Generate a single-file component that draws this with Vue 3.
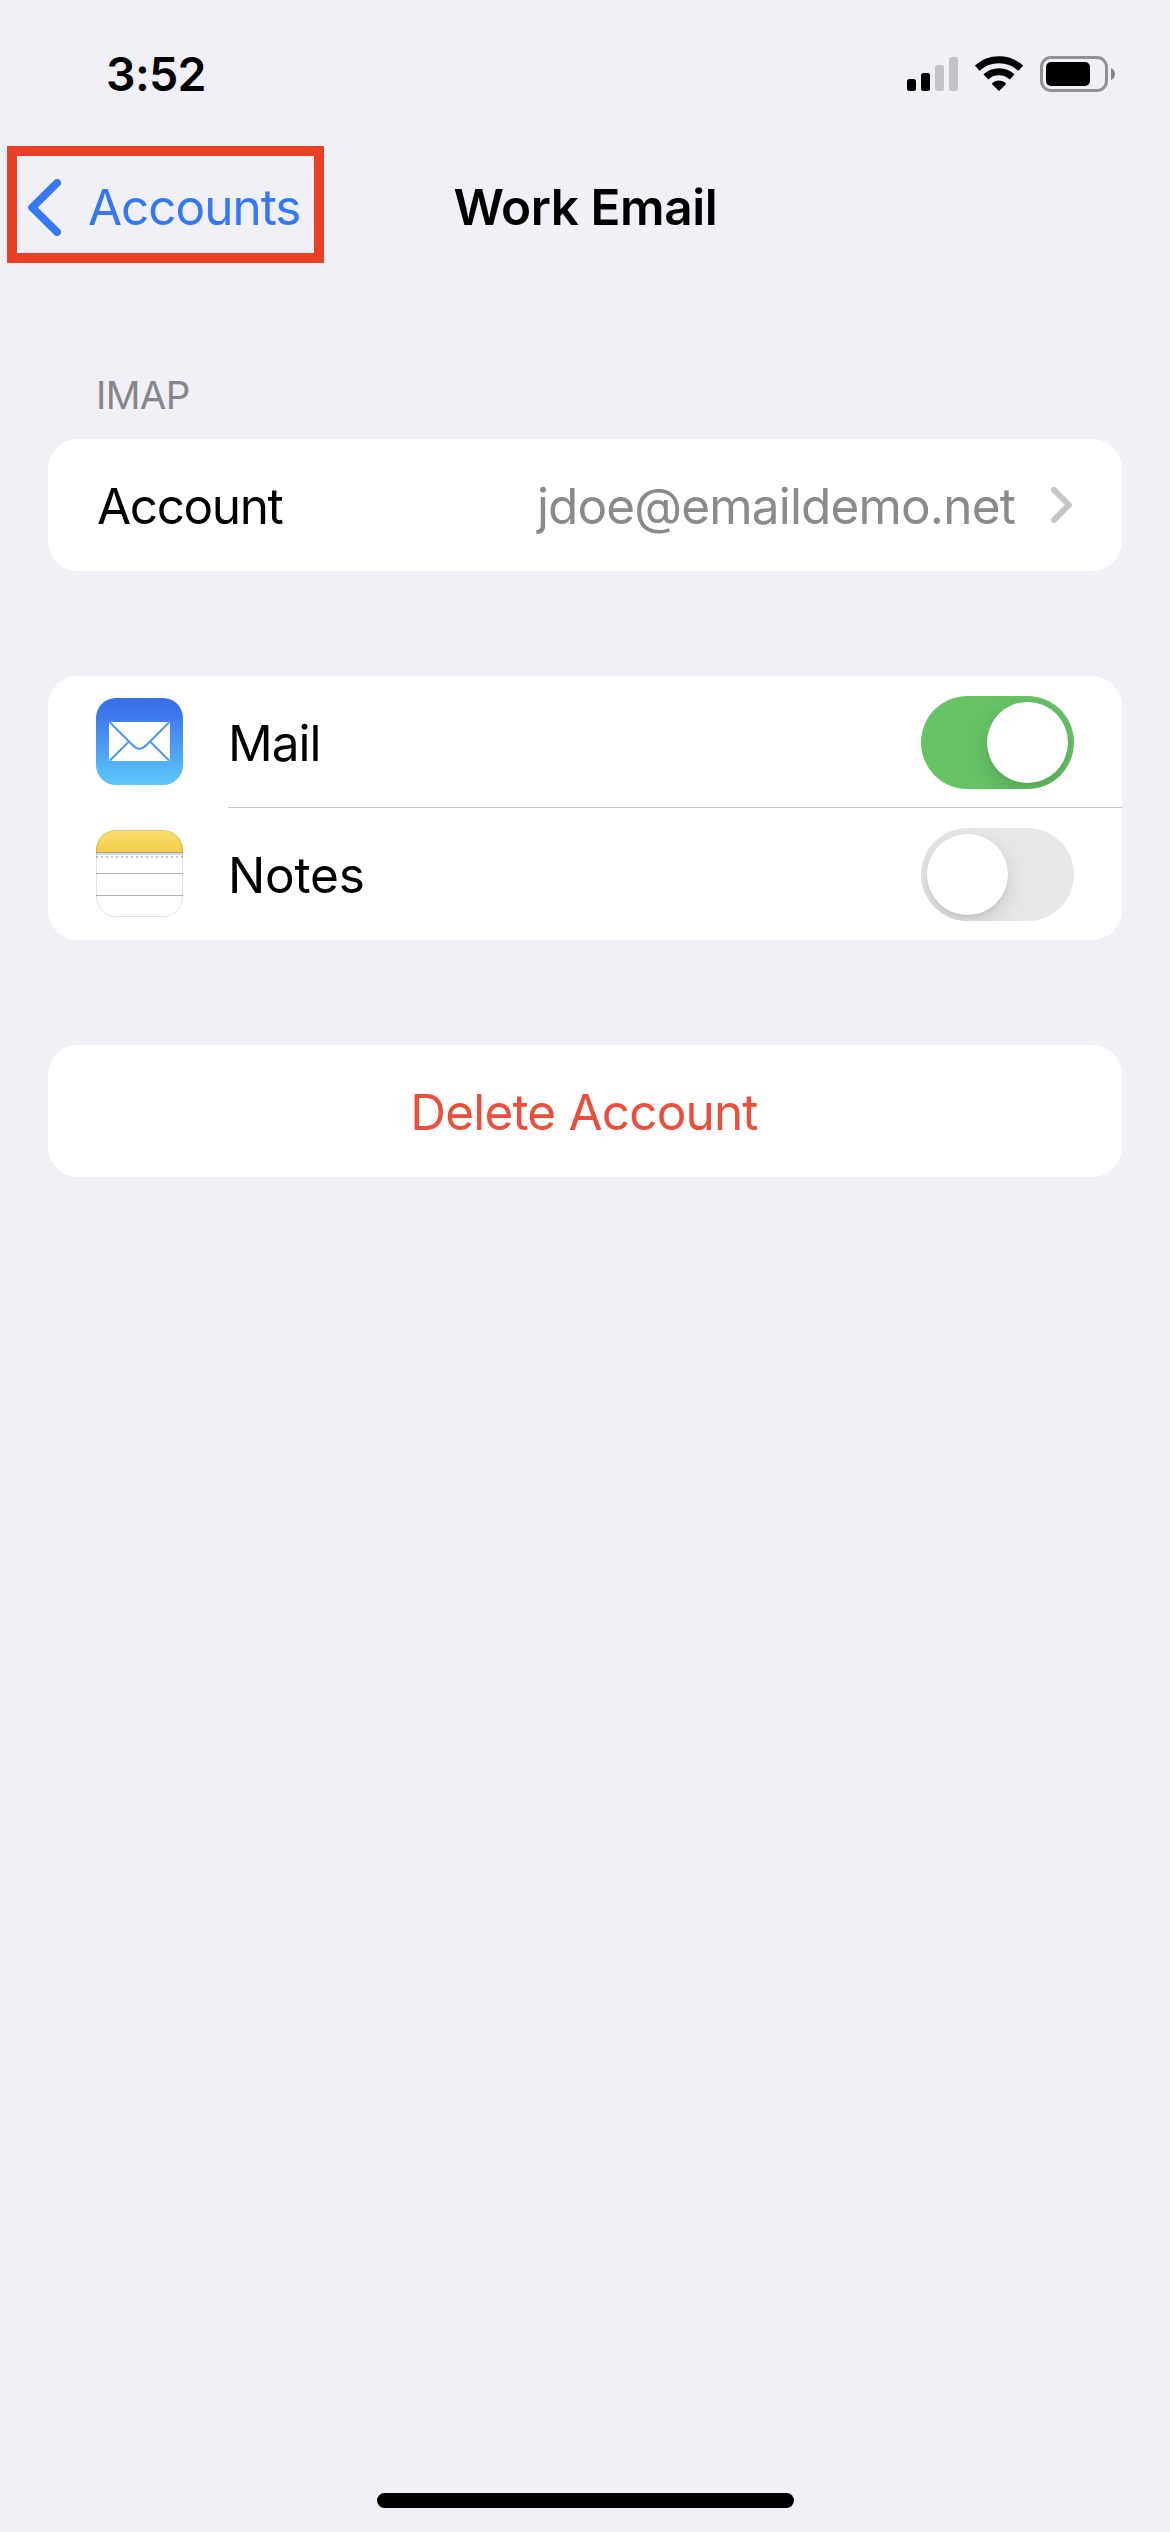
<script setup>
import { ref } from 'vue'

const services = ref([
  { id: 'mail', label: 'Mail', on: true },
  { id: 'notes', label: 'Notes', on: false },
])
</script>

<template>
  <div class="screen">
    <header class="status">
      <span class="clock">3:52</span>
      <svg class="indicators" width="210" height="40" viewBox="906 54 210 40">
        <rect x="907" y="79" width="9" height="12" rx="2.5" />
        <rect x="921" y="73" width="9" height="18" rx="2.5" />
        <rect x="935" y="65" width="9" height="26" rx="2.5" fill="#c3c2c7" />
        <rect x="949" y="57" width="9" height="34" rx="2.5" fill="#c3c2c7" />
        <g fill="none" stroke="#000" stroke-width="7">
          <path d="M977.2 68.2 A32.5 32.5 0 0 1 1020.8 68.2" />
          <path d="M985.8 76.8 A19.5 19.5 0 0 1 1012.2 76.8" />
        </g>
        <path d="M999 91 L992.3 84.4 Q991.6 83.5 992.6 82.8 Q999 78 1005.4 82.8 Q1006.4 83.5 1005.7 84.4 Z" />
        <rect x="1041.5" y="57.5" width="65" height="33" rx="9.5" fill="none" stroke="#929195" stroke-width="3" />
        <rect x="1046" y="62" width="44" height="24" rx="5" />
        <path d="M1111 68 Q1115 70 1115 74 Q1115 78 1111 80 Z" fill="#848387" />
      </svg>
    </header>

    <nav class="navbar">
      <a class="back">
        <svg width="33" height="57" viewBox="0 0 33 57">
          <path d="M29 4 L4.2 28.5 L29 53" fill="none" stroke="#3478f6" stroke-width="8" stroke-linecap="round" stroke-linejoin="round" />
        </svg>
        <span>Accounts</span>
      </a>
      <h1>Work Email</h1>
    </nav>

    <main>
      <h2>IMAP</h2>
      <section class="card row">
        <span class="account">Account</span>
        <span class="value">jdoe@emaildemo.net</span>
        <svg class="chevron" width="21" height="36" viewBox="0 0 21 36">
          <path d="M3 3 L18 18 L3 33" fill="none" stroke="#c5c5c7" stroke-width="6" stroke-linecap="round" stroke-linejoin="round" />
        </svg>
      </section>

      <section class="card">
        <div v-for="s in services" :key="s.id" class="service">
          <svg v-if="s.id === 'mail'" class="icon" width="87" height="87" viewBox="0 0 87 87">
            <defs>
              <linearGradient id="sky" x1="0" y1="0" x2="0" y2="1">
                <stop offset="0" stop-color="#366ee9" />
                <stop offset="0.18" stop-color="#3d78ec" />
                <stop offset="0.88" stop-color="#5abdf7" />
                <stop offset="1" stop-color="#60c7fa" />
              </linearGradient>
            </defs>
            <rect width="87" height="87" rx="20" fill="url(#sky)" />
            <rect x="13" y="24" width="61" height="39" rx="1.5" fill="#fff" />
            <path d="M14 24.5 L36.5 47 Q43.5 54.5 50.5 47 L73 24.5 M14 62.5 L32.5 44 M73 62.5 L54.5 44" fill="none" stroke="#4b97f1" stroke-width="2" />
          </svg>
          <svg v-else class="icon" width="87" height="87" viewBox="0 0 87 87">
            <defs>
              <linearGradient id="sun" x1="0" y1="0" x2="0" y2="1">
                <stop offset="0" stop-color="#f9df73" />
                <stop offset="1" stop-color="#f5cd45" />
              </linearGradient>
              <clipPath id="tile"><rect width="87" height="87" rx="20" /></clipPath>
            </defs>
            <g clip-path="url(#tile)">
              <rect width="87" height="87" fill="#fff" />
              <rect width="87" height="22" fill="url(#sun)" />
              <rect y="22" width="87" height="1.3" fill="#a39c98" />
              <rect y="23.3" width="87" height="1.7" fill="#d9d7d9" />
              <path d="M0 27 H87" stroke="#c2c1c3" stroke-width="2" stroke-dasharray="2 3" />
              <path d="M0 43.5 H87 M0 65.5 H87" stroke="#b4b4b6" stroke-width="1" />
            </g>
            <rect x="0.5" y="0.5" width="86" height="86" rx="19.5" fill="none" stroke="#000" stroke-opacity="0.11" />
          </svg>
          <div class="body">
            <span :class="s.id">{{ s.label }}</span>
            <button class="switch" :class="{ on: s.on }" role="switch" :aria-checked="s.on" @click="s.on = !s.on">
              <i class="thumb" />
            </button>
          </div>
        </div>
      </section>

      <section class="card delete"><span>Delete Account</span></section>
    </main>

    <div class="home" />
  </div>
</template>

<style>
body {
  background: #f1f0f6;
}
</style>

<style scoped>
.screen {
  box-sizing: border-box;
  width: 1170px;
  height: 2532px;
  display: flex;
  flex-direction: column;
  overflow: hidden;
  background: #f1f0f6;
  color: #000;
  font: 400 49.5px/60px Inter, 'Liberation Sans', sans-serif;
  white-space: nowrap;
}
svg {
  display: block;
  flex: none;
}
.status,
.navbar,
.row,
.service,
.switch {
  box-sizing: border-box;
}
.status {
  display: flex;
  justify-content: space-between;
  height: 146px;
  padding: 54px 54px 0 106px;
}
.clock {
  margin-top: -10px;
  font-size: 46.5px;
  font-weight: 600;
  letter-spacing: -0.7px;
}
.navbar {
  display: grid;
  grid-template-columns: 446.5px 1fr;
  height: 117px;
  padding-left: 7px;
}
.back {
  box-sizing: border-box;
  display: flex;
  align-items: center;
  width: 317px;
  height: 117px;
  padding: 5px 0 0 11px;
  border: 10px solid #ea4025;
  color: #3478f6;
  letter-spacing: -1.04px;
}
.back span {
  margin-left: 27px;
}
h1 {
  margin: 31px 0 0;
  font: inherit;
  font-weight: 600;
  letter-spacing: -0.43px;
}
main {
  flex: 1;
  padding: 102px 48px 0;
}
h2 {
  margin: 0 0 14px;
  padding-left: 48px;
  font: inherit;
  font-size: 38.5px;
  letter-spacing: -0.67px;
  color: #86868b;
}
.card {
  margin-bottom: 105px;
  border-radius: 30px;
  background: #fff;
  overflow: hidden;
}
.card span {
  padding-top: 2px;
}
.row {
  display: flex;
  align-items: center;
  height: 132px;
  padding: 0 50px 0 49px;
}
.account {
  letter-spacing: -1.4px;
}
.value {
  margin-left: auto;
  color: #8a8a8c;
  letter-spacing: -0.85px;
}
.chevron {
  margin-left: 36px;
}
.service {
  display: flex;
  align-items: center;
  height: 132px;
  padding-left: 48px;
}
.icon {
  margin-top: -1px;
}
.body {
  flex: 1;
  box-sizing: border-box;
  display: flex;
  align-items: center;
  justify-content: space-between;
  height: 132px;
  margin-left: 45px;
  padding: 0 48px 0 0;
  box-shadow: inset 0 -1px #c6c6c8;
}
.service:last-child .body {
  box-shadow: none;
}
.mail {
  letter-spacing: -1px;
}
.notes {
  letter-spacing: -0.2px;
}
.switch {
  width: 153px;
  height: 93px;
  margin: 1px 0 0;
  padding: 6px;
  border: 0;
  border-radius: 47px;
  background: #e8e8e9;
  display: flex;
  overflow: hidden;
}
.switch.on {
  justify-content: flex-end;
  background: #66c466;
}
.thumb {
  width: 81px;
  height: 81px;
  border-radius: 50%;
  background: #fff;
  box-shadow: 0 8px 22px rgba(0, 0, 0, 0.15), 0 3px 3px rgba(0, 0, 0, 0.04);
}
.delete {
  display: flex;
  align-items: center;
  justify-content: center;
  height: 132px;
  color: #eb4e3d;
  letter-spacing: -0.83px;
}
.delete span {
  padding-right: 2px;
}
.home {
  width: 417px;
  height: 15px;
  margin: 0 auto 24px 377px;
  border-radius: 8px;
  background: #000;
}
</style>
